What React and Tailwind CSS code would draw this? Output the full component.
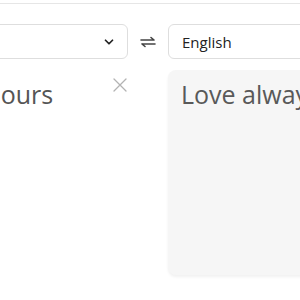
import React from "react";

function Chevron() {
  return (
    <svg width="14" height="14" viewBox="0 0 24 24" fill="none" stroke="#222" strokeWidth="3" strokeLinecap="round" strokeLinejoin="round">
      <path d="M6 9l6 6 6-6" />
    </svg>
  );
}

function Swap() {
  return (
    <svg width="16" height="12" viewBox="0 0 16 12" fill="none" stroke="#444" strokeWidth="1.6" strokeLinecap="round" strokeLinejoin="round">
      <path d="M1 4h13M11 1.5L14 4" />
      <path d="M15 8H2M5 10.5L2 8" />
    </svg>
  );
}

function Close() {
  return (
    <svg width="14" height="14" viewBox="0 0 14 14" fill="none" stroke="#b3b3b3" strokeWidth="1.3" strokeLinecap="round">
      <path d="M1 1l12 12M13 1L1 13" />
    </svg>
  );
}

export default function App() {
  return (
    <div className="w-[300px] h-[300px] overflow-hidden bg-white" style={{ fontFamily: '"Open Sans", "Liberation Sans", sans-serif' }}>
      <div className="h-[4px] border-b border-[#e6e6e6]" />
      <div className="flex ml-[-144px] w-[720px] pt-[20px]">
        <div className="w-[272px] flex flex-col">
          <div className="h-[35px] rounded-md border border-[#dedede] flex items-center justify-end pr-[11px]">
            <Chevron />
          </div>
          <div className="flex mt-[11px] h-[205px]">
            <div className="flex-1 pl-[13px] pt-[8px] text-[25px] leading-[32px] text-[#555] whitespace-nowrap">Amour toujours</div>
            <div className="pt-[8px] pr-[1px]">
              <Close />
            </div>
          </div>
        </div>
        <div className="w-[40px] h-[35px] flex items-center justify-center">
          <Swap />
        </div>
        <div className="w-[272px] flex flex-col">
          <div className="h-[35px] rounded-md border border-[#dedede] flex items-center pl-[13px] pt-[1px] text-[15px] text-[#222]">English</div>
          <div className="mt-[11px] h-[205px] rounded-lg bg-[#f6f6f6] shadow-[0_2px_3px_rgba(0,0,0,0.06)] pl-[13px] pt-[8px] text-[25px] leading-[32px] text-[#595959] whitespace-nowrap">Love always</div>
        </div>
      </div>
    </div>
  );
}
